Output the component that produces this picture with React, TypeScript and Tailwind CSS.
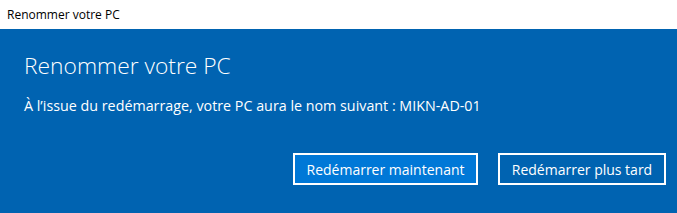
export default function App() {
  return (
    <div className="w-[677px] h-[213px] flex flex-col bg-white font-['Open_Sans',sans-serif] overflow-hidden">
      <div className="h-[29px] flex items-center pl-[7px] text-[12px] text-black bg-white">
        Renommer votre PC
      </div>
      <div className="flex-1 bg-[#0063b1] text-white pl-[24px] pr-[11px]">
        <h1 className="mt-[22px] text-[22.8px] font-light leading-[30px]">Renommer votre PC</h1>
        <p className="mt-[15px] text-[14.3px] leading-[20px]">
          À l’issue du redémarrage, votre PC aura le nom suivant : MIKN-AD-01
        </p>
        <div className="mt-[37px] flex justify-end gap-[20px]">
          <button className="w-[185px] h-[32px] border-2 border-white bg-[#0078d7] text-[14px] text-white">
            Redémarrer maintenant
          </button>
          <button className="w-[168px] h-[32px] border-2 border-white bg-[#0063b1] text-[14px] text-white">
            Redémarrer plus tard
          </button>
        </div>
      </div>
    </div>
  );
}
